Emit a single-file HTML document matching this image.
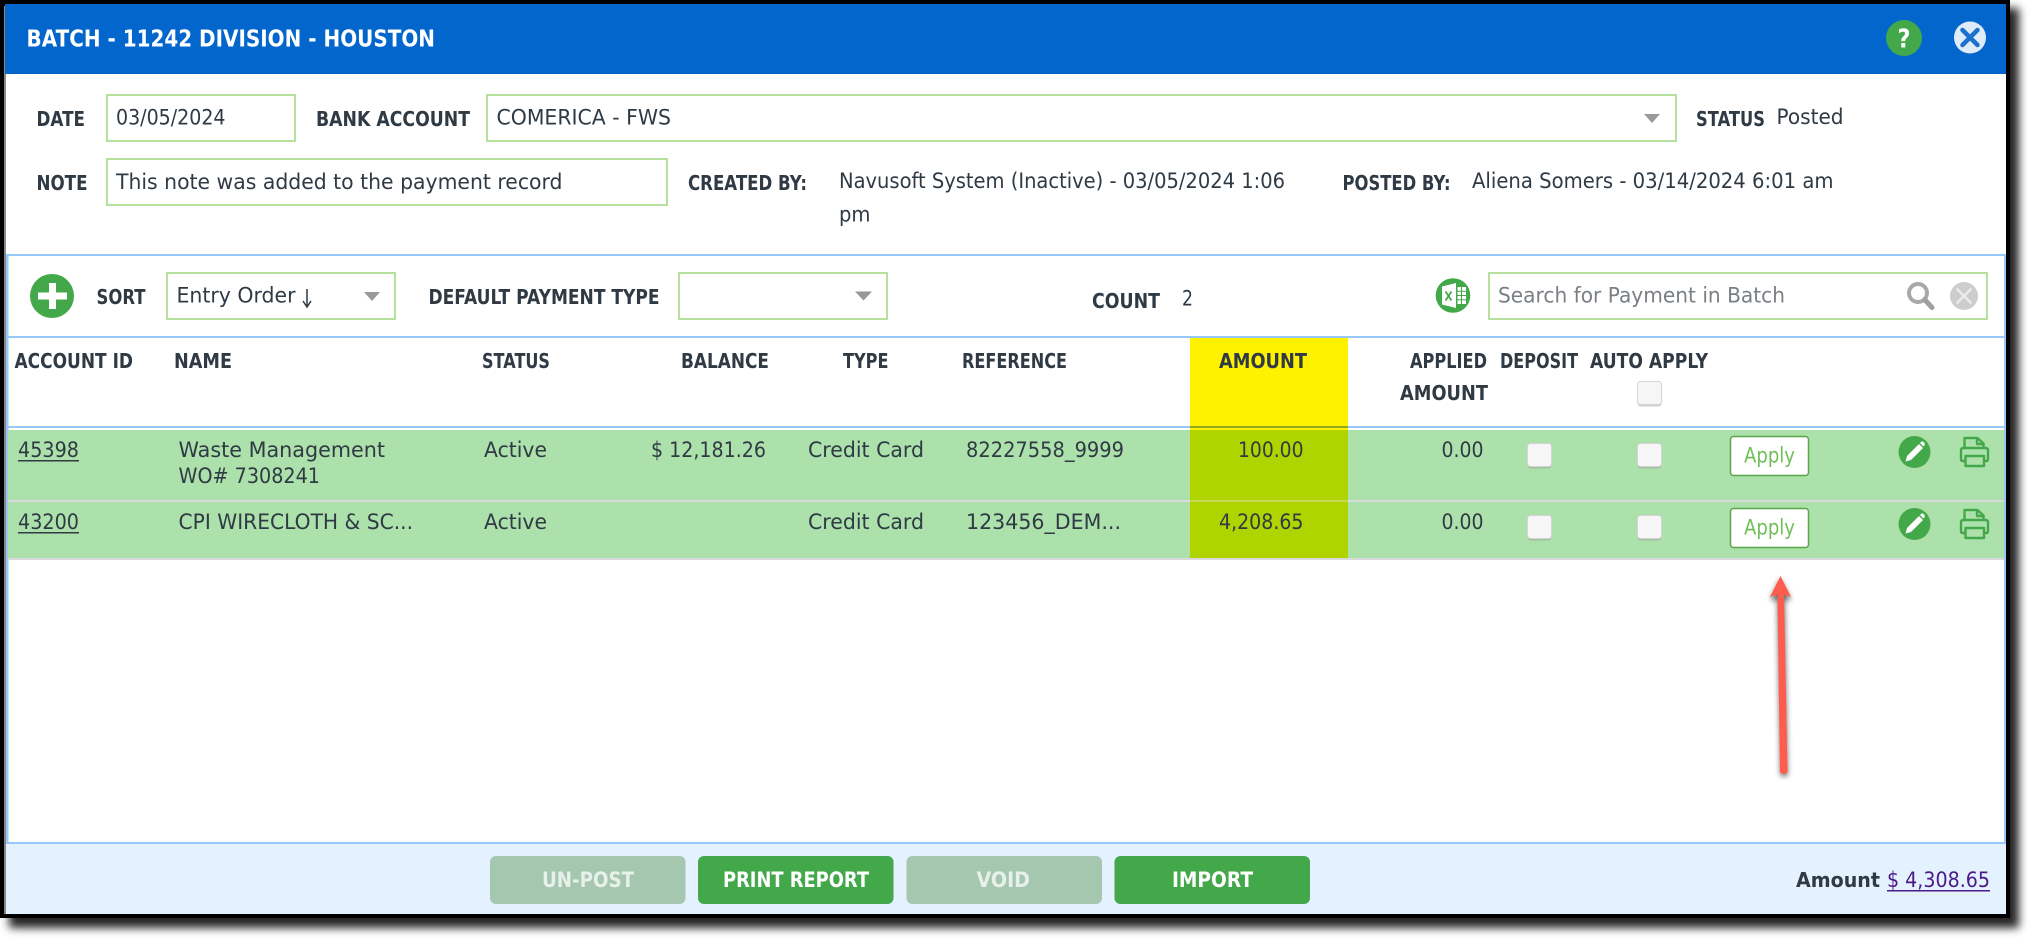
<!DOCTYPE html>
<html lang="en">
<head>
<meta charset="utf-8">
<title>Batch - 11242 Division - Houston</title>
<style>
html,body{margin:0;padding:0;width:2030px;height:938px;overflow:hidden;background:#fff}
svg{display:block}
text{font-family:"DejaVu Sans","Liberation Sans",sans-serif;fill:#2f3a44;font-size:21px}
.b{font-weight:700;font-size:20px}
.n{font-size:21.500px}
</style>
</head>
<body>
<svg width="2030" height="938" viewBox="0 0 2030 938" xmlns="http://www.w3.org/2000/svg">
<defs>
<filter id="sh" x="-5%" y="-5%" width="110%" height="110%"><feGaussianBlur stdDeviation="4.5"/></filter>
<filter id="ash" x="-200%" y="-10%" width="500%" height="120%"><feGaussianBlur stdDeviation="3"/></filter>
<g id="cb"><rect x="0.5" y="1.5" width="24" height="24" rx="3" fill="#999" opacity=".45"/><rect x="0.5" y="0.5" width="24" height="23" rx="3" fill="#f6f6f6" stroke="#d4d4d4"/></g>
<g id="pencil"><circle cx="0" cy="0" r="16" fill="#43a84a"/><path d="M-9 9.5 L-7.5 4 L4.5 -8 L8.5 -4 L-3.5 8 Z" fill="#fff"/><path d="M5.5 -9 L7 -10.5 Q8 -11 9 -10 L10 -9 Q10.800 -8 10 -7 L8.800 -5.500 Z" fill="#fff"/></g>
<g id="printer" fill="none" stroke="#43a84a" stroke-width="2.4" stroke-linejoin="round"><path d="M4.500 11 V1 H17.500 L23.500 6.500 V11"/><path d="M17 1.500 V7 H23"/><path d="M5 24 H2.500 Q1 24 1 22 V13.500 Q1 11 3.500 11 H25.500 Q28 11 28 13.500 V22 Q28 24 26.500 24 H24"/><rect x="5.500" y="19" width="18.500" height="10"/></g>
</defs>

<!-- outer shadow and frame -->
<rect x="9" y="8" width="2010" height="920" fill="#000" opacity=".85" filter="url(#sh)"/>
<rect x="0" y="0" width="2010" height="918" fill="#000"/>
<rect x="6" y="4" width="2000" height="910" fill="#fff"/>
<rect x="4" y="6" width="2" height="908" fill="#888"/>

<!-- header -->
<rect x="5" y="4" width="2001" height="70" fill="#0366cc"/>
<text x="26.500" y="46.500" textLength="408.500" lengthAdjust="spacingAndGlyphs" style="fill:#fff;font-weight:700;font-size:23px">BATCH - 11242 DIVISION - HOUSTON</text>
<circle cx="1904" cy="38" r="18" fill="#43a84a"/>
<text x="1897.500" y="47.500" textLength="13" lengthAdjust="spacingAndGlyphs" style="fill:#fff;font-weight:700;font-size:26px">?</text>
<circle cx="1970" cy="37.500" r="16" fill="#e0ebfa"/>
<path d="M1962.500 30 L1977.500 45 M1977.500 30 L1962.500 45" stroke="#1a72cf" stroke-width="4.500" stroke-linecap="round"/>

<!-- form top -->
<text class="b" x="36.500" y="126" textLength="48.500" lengthAdjust="spacingAndGlyphs">DATE</text>
<rect x="107" y="95" width="188" height="46" fill="#fff" stroke="#b5e09e" stroke-width="2"/>
<text class="n" x="116" y="124.500" textLength="109.500" lengthAdjust="spacingAndGlyphs">03/05/2024</text>
<text class="b" x="316" y="126" textLength="154" lengthAdjust="spacingAndGlyphs">BANK ACCOUNT</text>
<rect x="487" y="95" width="1189" height="46" fill="#fff" stroke="#b5e09e" stroke-width="2"/>
<text class="n" x="496.500" y="124.500" textLength="174.500" lengthAdjust="spacingAndGlyphs">COMERICA - FWS</text>
<path d="M1644 114 H1660 L1652 123 Z" fill="#999"/>
<text class="b" x="1696" y="126" textLength="69" lengthAdjust="spacingAndGlyphs">STATUS</text>
<text class="n" x="1776.500" y="124" textLength="67" lengthAdjust="spacingAndGlyphs">Posted</text>

<text class="b" x="36.500" y="190" textLength="51" lengthAdjust="spacingAndGlyphs">NOTE</text>
<rect x="107" y="159" width="560" height="46" fill="#fff" stroke="#b5e09e" stroke-width="2"/>
<text class="n" x="116" y="189" textLength="446.500" lengthAdjust="spacingAndGlyphs">This note was added to the payment record</text>
<text class="b" x="688" y="190" textLength="119" lengthAdjust="spacingAndGlyphs">CREATED BY:</text>
<text class="n" x="839" y="188" textLength="446" lengthAdjust="spacingAndGlyphs">Navusoft System (Inactive) - 03/05/2024 1:06</text>
<text class="n" x="839" y="221.500" textLength="31.500" lengthAdjust="spacingAndGlyphs">pm</text>
<text class="b" x="1342.500" y="190" textLength="108" lengthAdjust="spacingAndGlyphs">POSTED BY:</text>
<text class="n" x="1472" y="188" textLength="361.500" lengthAdjust="spacingAndGlyphs">Aliena Somers - 03/14/2024 6:01 am</text>

<!-- toolbar -->
<rect x="6" y="254" width="2000" height="2" fill="#96c8fb"/>
<circle cx="52" cy="296" r="22" fill="#43a84a"/>
<path d="M49 283 h7 v9.500 h11 v7 h-11 v9.500 h-7 v-9.500 h-11 v-7 h11 z" fill="#fff"/>
<text class="b" x="96.500" y="304" textLength="49" lengthAdjust="spacingAndGlyphs">SORT</text>
<rect x="167" y="273" width="228" height="46" fill="#fff" stroke="#b5e09e" stroke-width="2"/>
<text class="n" x="176.500" y="302.500" textLength="119" lengthAdjust="spacingAndGlyphs">Entry Order</text>
<path d="M307 289 V306 M303 301 L307 307 L311 301" fill="none" stroke="#2f3a44" stroke-width="1.500"/>
<path d="M364 292 H380 L372 301 Z" fill="#999"/>
<text class="b" x="428.500" y="304" textLength="231" lengthAdjust="spacingAndGlyphs">DEFAULT PAYMENT TYPE</text>
<rect x="679" y="273" width="208" height="46" fill="#fff" stroke="#b5e09e" stroke-width="2"/>
<path d="M855 291.500 H872 L863.500 300.500 Z" fill="#999"/>
<text class="b" x="1092" y="308" textLength="68" lengthAdjust="spacingAndGlyphs">COUNT</text>
<text class="n" x="1182" y="305.500" textLength="11" lengthAdjust="spacingAndGlyphs">2</text>

<circle cx="1453" cy="295.500" r="17.300" fill="#43a84a"/>
<path d="M1442 286.500 L1456 283 V308 L1442 304.500 Z" fill="#fff"/>
<rect x="1457.500" y="287" width="8.500" height="17" fill="#fff"/>
<path d="M1461.500 287 V304 M1457.500 291.200 H1466 M1457.500 295.500 H1466 M1457.500 299.800 H1466" stroke="#43a84a" stroke-width="1"/>
<path d="M1445.500 291.500 L1451.500 300.500 M1451.500 291.500 L1445.500 300.500" stroke="#43a84a" stroke-width="1.700"/>

<rect x="1489" y="273" width="498" height="46" fill="#fff" stroke="#b5e09e" stroke-width="2"/>
<text class="n" x="1498" y="302.500" textLength="287" lengthAdjust="spacingAndGlyphs" style="fill:#7a7f84">Search for Payment in Batch</text>
<circle cx="1918" cy="293" r="9" fill="none" stroke="#a8a8a8" stroke-width="4"/>
<path d="M1925 300 L1932 307.500" stroke="#a0a0a0" stroke-width="5" stroke-linecap="round"/>
<circle cx="1964" cy="296" r="14" fill="#cdcdcd"/>
<path d="M1957.500 289.500 L1970.500 302.500 M1970.500 289.500 L1957.500 302.500" stroke="#ececec" stroke-width="2.500" stroke-linecap="round"/>

<!-- table -->
<rect x="6" y="254" width="2.500" height="588" fill="#96c8fb"/>
<rect x="2004" y="254" width="2" height="588" fill="#96c8fb"/>
<rect x="6" y="336" width="2000" height="2" fill="#96c8fb"/>
<rect x="1190" y="338" width="158" height="88" fill="#fff200"/>
<rect x="6" y="426" width="1998" height="2" fill="#96c8fb"/>
<rect x="1190" y="426" width="158" height="2" fill="#94a820"/>
<rect x="1190" y="428" width="158" height="2" fill="#fff200"/>
<rect x="8" y="430" width="1996" height="70" fill="#ade1ab"/>
<rect x="8" y="500" width="1996" height="2" fill="#dadada"/>
<rect x="8" y="502" width="1996" height="56" fill="#ade1ab"/>
<rect x="8" y="558" width="1996" height="2" fill="#dadada"/>
<rect x="1190" y="430" width="158" height="70" fill="#b0d400"/>
<rect x="1190" y="500" width="158" height="2" fill="#c7d85a"/>
<rect x="1190" y="502" width="158" height="56" fill="#b0d400"/>

<text class="b" x="14.500" y="368" textLength="118.500" lengthAdjust="spacingAndGlyphs">ACCOUNT ID</text>
<text class="b" x="174" y="368" textLength="58" lengthAdjust="spacingAndGlyphs">NAME</text>
<text class="b" x="482" y="368" textLength="68" lengthAdjust="spacingAndGlyphs">STATUS</text>
<text class="b" x="681" y="368" textLength="88" lengthAdjust="spacingAndGlyphs">BALANCE</text>
<text class="b" x="843" y="368" textLength="45.500" lengthAdjust="spacingAndGlyphs">TYPE</text>
<text class="b" x="962" y="368" textLength="105" lengthAdjust="spacingAndGlyphs">REFERENCE</text>
<text class="b" x="1219" y="368" textLength="88" lengthAdjust="spacingAndGlyphs">AMOUNT</text>
<text class="b" x="1410" y="368" textLength="77" lengthAdjust="spacingAndGlyphs">APPLIED</text>
<text class="b" x="1400" y="400" textLength="88" lengthAdjust="spacingAndGlyphs">AMOUNT</text>
<text class="b" x="1500" y="368" textLength="78" lengthAdjust="spacingAndGlyphs">DEPOSIT</text>
<text class="b" x="1590" y="368" textLength="118" lengthAdjust="spacingAndGlyphs">AUTO APPLY</text>
<use href="#cb" x="1637" y="381"/>

<!-- row 1 -->
<text class="n" x="18" y="457" textLength="61" lengthAdjust="spacingAndGlyphs">45398</text>
<rect x="18" y="460" width="61" height="1.500" fill="#2f3a44"/>
<text class="n" x="178.500" y="457" textLength="206.500" lengthAdjust="spacingAndGlyphs">Waste Management</text>
<text class="n" x="178.500" y="483" textLength="141.500" lengthAdjust="spacingAndGlyphs">WO# 7308241</text>
<text class="n" x="484" y="457" textLength="63" lengthAdjust="spacingAndGlyphs">Active</text>
<text class="n" x="651" y="457" textLength="115" lengthAdjust="spacingAndGlyphs">$ 12,181.26</text>
<text class="n" x="808" y="457" textLength="116" lengthAdjust="spacingAndGlyphs">Credit Card</text>
<text class="n" x="966" y="457" textLength="158" lengthAdjust="spacingAndGlyphs">82227558_9999</text>
<text class="n" x="1238" y="457" textLength="65.500" lengthAdjust="spacingAndGlyphs">100.00</text>
<text class="n" x="1441.500" y="457" textLength="42" lengthAdjust="spacingAndGlyphs">0.00</text>
<use href="#cb" x="1527" y="443"/>
<use href="#cb" x="1637" y="443"/>
<rect x="1730.500" y="436.500" width="78" height="39" rx="3" fill="#fff" stroke="#5aa845" stroke-width="1.500"/>
<text x="1744" y="462.500" textLength="51" lengthAdjust="spacingAndGlyphs" style="fill:#6fbf58;font-size:21px">Apply</text>
<use href="#pencil" x="1914.500" y="452"/>
<use href="#printer" x="1960" y="437"/>

<!-- row 2 -->
<text class="n" x="18" y="529" textLength="61" lengthAdjust="spacingAndGlyphs">43200</text>
<rect x="18" y="532" width="61" height="1.500" fill="#2f3a44"/>
<text class="n" x="178.500" y="529" textLength="234.500" lengthAdjust="spacingAndGlyphs">CPI WIRECLOTH &amp; SC...</text>
<text class="n" x="484" y="529" textLength="63" lengthAdjust="spacingAndGlyphs">Active</text>
<text class="n" x="808" y="529" textLength="116" lengthAdjust="spacingAndGlyphs">Credit Card</text>
<text class="n" x="966" y="529" textLength="155" lengthAdjust="spacingAndGlyphs">123456_DEM...</text>
<text class="n" x="1219" y="529" textLength="84.500" lengthAdjust="spacingAndGlyphs">4,208.65</text>
<text class="n" x="1441.500" y="529" textLength="42" lengthAdjust="spacingAndGlyphs">0.00</text>
<use href="#cb" x="1527" y="515"/>
<use href="#cb" x="1637" y="515"/>
<rect x="1730.500" y="508.500" width="78" height="39" rx="3" fill="#fff" stroke="#5aa845" stroke-width="1.500"/>
<text x="1744" y="534.500" textLength="51" lengthAdjust="spacingAndGlyphs" style="fill:#6fbf58;font-size:21px">Apply</text>
<use href="#pencil" x="1914.500" y="524"/>
<use href="#printer" x="1960" y="509"/>

<!-- red arrow -->
<g filter="url(#ash)" opacity=".6" transform="translate(0,3)"><path d="M1780 576 L1770.500 597 H1777.500 L1780.500 773 H1787.500 L1784.500 597 H1791 Z" fill="#000"/></g>
<path d="M1780.500 576 L1770 597 L1777.500 594.500 L1780 772 Q1784 776 1787.500 772 L1784 594.500 L1791 597 Z" fill="#ff5c4e"/>

<!-- footer -->
<rect x="6" y="844" width="2000" height="70" fill="#e4f1ff"/>
<rect x="6" y="842" width="2000" height="2" fill="#96c8fb"/>
<rect x="490" y="856" width="195.500" height="48" rx="6" fill="#a5c7b0"/>
<rect x="698" y="856" width="195.500" height="48" rx="6" fill="#43a84a"/>
<rect x="906.500" y="856" width="195.500" height="48" rx="6" fill="#a5c7b0"/>
<rect x="1114.500" y="856" width="195.500" height="48" rx="6" fill="#43a84a"/>
<text x="542" y="887" textLength="92" lengthAdjust="spacingAndGlyphs" style="fill:#e8f0ea;font-weight:700;font-size:21px">UN-POST</text>
<text x="723" y="887" textLength="146" lengthAdjust="spacingAndGlyphs" style="fill:#fff;font-weight:700;font-size:21px">PRINT REPORT</text>
<text x="976.500" y="887" textLength="53.500" lengthAdjust="spacingAndGlyphs" style="fill:#e8f0ea;font-weight:700;font-size:21px">VOID</text>
<text x="1172" y="887" textLength="81" lengthAdjust="spacingAndGlyphs" style="fill:#fff;font-weight:700;font-size:21px">IMPORT</text>
<text x="1796" y="887" textLength="84" lengthAdjust="spacingAndGlyphs" style="font-weight:700;font-size:20.500px">Amount</text>
<text x="1887" y="887" textLength="103" lengthAdjust="spacingAndGlyphs" style="fill:#4b1a86;font-size:21px">$ 4,308.65</text>
<rect x="1887" y="890" width="103" height="1.500" fill="#4b1a86"/>
</svg>
</body>
</html>
